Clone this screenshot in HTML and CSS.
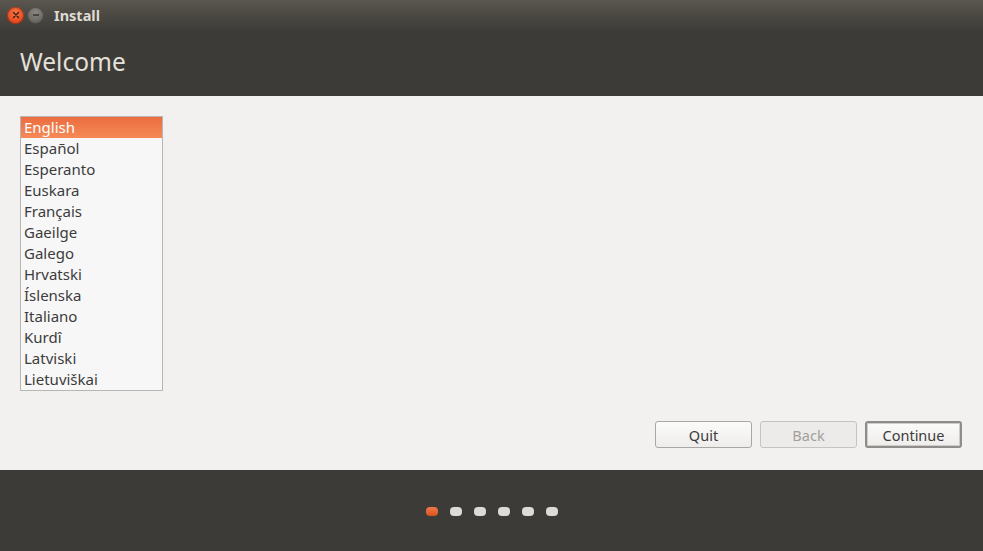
FILE: index.html
```html
<!DOCTYPE html>
<html>
<head>
<meta charset="utf-8">
<link rel="stylesheet" href="styles.css">
</head>
<body>
<div class="window">
  <div class="titlebar">
    <div class="wbtn close">
      <svg width="8" height="8" viewBox="0 0 8 8"><path d="M1.5 1.5 L6.5 6.5 M6.5 1.5 L1.5 6.5" stroke="#3a1a10" stroke-width="1.3" stroke-linecap="round"/></svg>
    </div>
    <div class="wbtn min">
      <svg width="8" height="8" viewBox="0 0 8 8"><path d="M1 4 H7" stroke="#2e2d2a" stroke-width="1.4"/></svg>
    </div>
    <span class="title">Install</span>
  </div>
  <div class="header">
    <h1 class="heading">Welcome</h1>
  </div>
  <div class="content">
    <ul class="langlist">
      <li class="selected">English</li>
      <li>Español</li>
      <li>Esperanto</li>
      <li>Euskara</li>
      <li>Français</li>
      <li>Gaeilge</li>
      <li>Galego</li>
      <li>Hrvatski</li>
      <li>Íslenska</li>
      <li>Italiano</li>
      <li>Kurdî</li>
      <li>Latviski</li>
      <li>Lietuviškai</li>
    </ul>
    <div class="buttons">
      <button class="btn">Quit</button>
      <button class="btn disabled">Back</button>
      <button class="btn default">Continue</button>
    </div>
  </div>
  <div class="footer">
    <span class="dot active"></span>
    <span class="dot"></span>
    <span class="dot"></span>
    <span class="dot"></span>
    <span class="dot"></span>
    <span class="dot"></span>
  </div>
</div>
</body>
</html>
```
FILE: styles.css
```css
* { box-sizing: border-box; }
html, body { margin: 0; padding: 0; }
body {
  width: 983px;
  height: 551px;
  overflow: hidden;
  font-family: "Noto Sans", "DejaVu Sans", sans-serif;
  background: #3c3b37;
}
.window {
  display: flex;
  flex-direction: column;
  height: 551px;
}
.titlebar {
  height: 30px;
  display: flex;
  align-items: center;
  padding-left: 7px;
  background: linear-gradient(#5a564f 0px, #5a564f 1px, #4e4b45 12px, #3e3d39 30px);
}
.wbtn {
  width: 17px;
  height: 17px;
  border-radius: 50%;
  display: flex;
  align-items: center;
  justify-content: center;
  margin-right: 3px;
}
.close {
  background: radial-gradient(circle at 50% 35%, #f57a4c, #e5461b 70%);
  box-shadow: inset 0 0 0 1px rgba(120,30,10,0.5);
}
.min {
  background: radial-gradient(circle at 50% 35%, #8a8782, #68655f 70%);
  box-shadow: inset 0 0 0 1px rgba(40,40,40,0.5);
}
.title {
  margin-left: 7px;
  color: #dfdbd2;
  font-weight: bold;
  font-size: 14.5px;
}
.header {
  height: 66px;
  background: #3c3b37;
  display: flex;
  align-items: center;
  padding-left: 20px;
}
.heading {
  margin: 0 0 4px 0;
  font-weight: normal;
  font-size: 24.5px;
  color: #e4e1db;
}
.content {
  height: 374px;
  background: #f2f1f0;
  padding: 20px 21px 0 20px;
  display: flex;
  flex-direction: column;
}
.langlist {
  list-style: none;
  margin: 0;
  padding: 0;
  width: 143px;
  border: 1px solid #b8b6b2;
  background: #f7f7f7;
}
.langlist li {
  height: 21px;
  line-height: 21px;
  padding-left: 3px;
  font-size: 15px;
  color: #3c3c3c;
}
.langlist li.selected {
  background: linear-gradient(#ec6d3f, #f58a57);
  color: #ffffff;
}
.buttons {
  display: flex;
  justify-content: flex-end;
  gap: 8px;
  margin-top: 30px;
}
.btn {
  width: 97px;
  height: 27px;
  font-family: "Noto Sans", "DejaVu Sans", sans-serif;
  font-size: 14.5px;
  color: #3c3c3c;
  border: 1px solid #a9a7a3;
  border-radius: 3px;
  background: linear-gradient(#fbfbfa, #eeedeb);
  padding: 0;
}
.btn.disabled {
  color: #a19f9b;
  border-color: #c6c4c0;
  background: #ecebe9;
}
.btn.default {
  border: 2px solid #8f8d89;
  box-shadow: inset 0 0 0 1px #cfcdc9;
}
.footer {
  flex: 1;
  background: #3c3b37;
  display: flex;
  justify-content: center;
  align-items: center;
  gap: 12px;
  padding-top: 2px;
}
.dot {
  width: 12px;
  height: 9px;
  border-radius: 4px;
  background: #dcdbd8;
}
.dot.active {
  background: linear-gradient(#f07a4a, #d9521e);
}
```
